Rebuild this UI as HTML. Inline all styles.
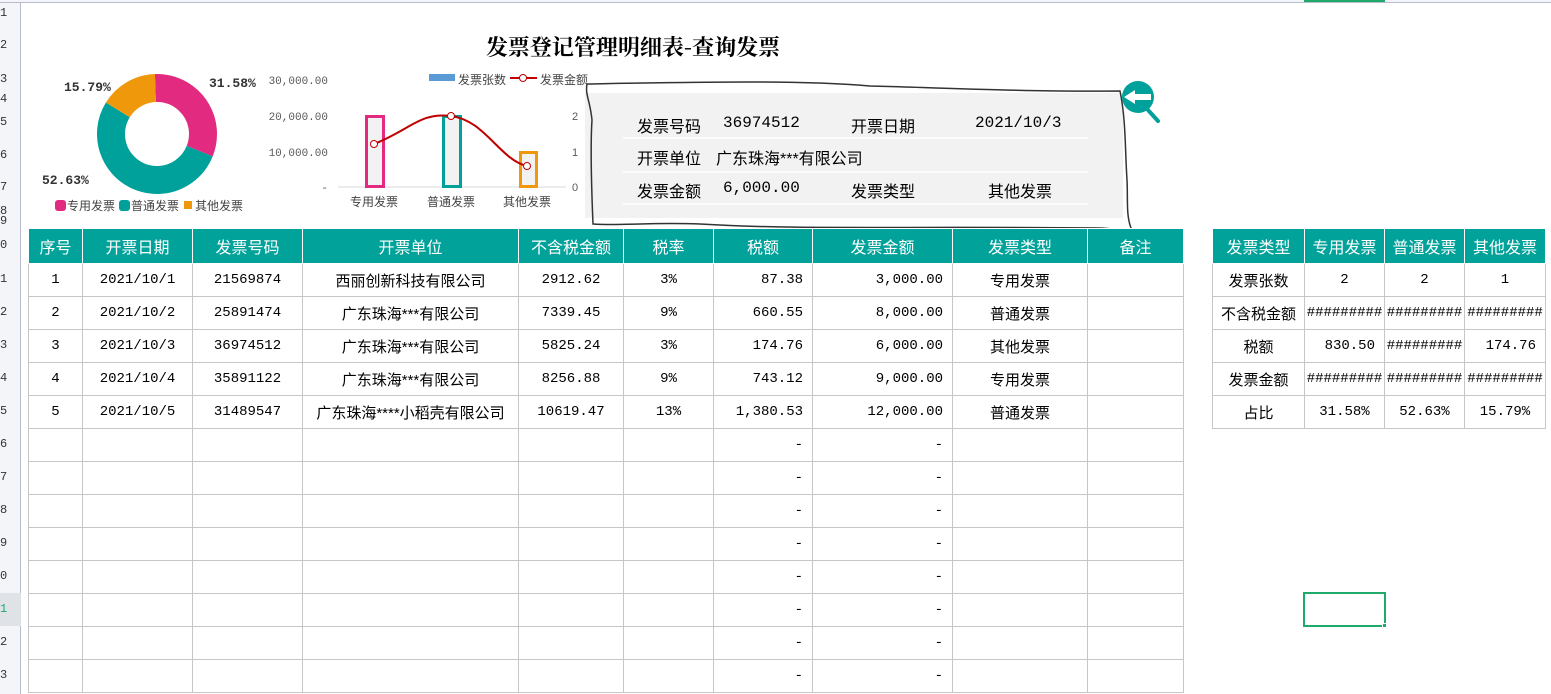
<!DOCTYPE html>
<html><head><meta charset="utf-8"><style>
*{margin:0;padding:0;box-sizing:border-box}
body{width:1551px;height:694px;overflow:hidden;background:#fff;position:relative;font-family:"Liberation Mono","Noto Sans CJK SC",monospace;color:#000}
.abs{position:absolute}
table{border-collapse:collapse;table-layout:fixed;position:absolute}
td{border:1px solid #c6c6c6;height:33px;font-size:14px;text-align:center;white-space:nowrap;overflow:hidden;padding:0 6px}
tr.h td{background:#00a29a;color:#fff;height:35px;font-size:16px;border-color:#fff;font-family:"Noto Sans CJK SC",sans-serif}
td.r{text-align:right;padding-right:9px}
td.cjk,.cjk{font-family:"Liberation Sans","Noto Sans CJK SC",sans-serif;font-size:15px}
.rh{position:absolute;left:0;width:20px;font-size:12px;text-align:right;padding-right:14px;color:#333}
</style></head><body>
<div class="abs" style="left:0;top:0;width:21px;height:694px;background:#f4f5f8;border-right:1px solid #b8bccc"></div>
<div class="abs" style="left:0;top:0;width:1551px;height:3px;background:#f4f5f8;border-bottom:1px solid #b8bccc"></div>
<div class="abs" style="left:1304px;top:0;width:81px;height:2px;background:#1faa6b"></div>
<div class="rh" style="top:6px">1</div><div class="rh" style="top:38px">2</div><div class="rh" style="top:72px">3</div><div class="rh" style="top:92px">4</div><div class="rh" style="top:115px">5</div><div class="rh" style="top:148px">6</div><div class="rh" style="top:180px">7</div><div class="rh" style="top:204px">8</div><div class="rh" style="top:214px">9</div><div class="rh" style="top:238px">0</div>
<div class="rh" style="top:272px">1</div><div class="rh" style="top:305px">2</div><div class="rh" style="top:338px">3</div><div class="rh" style="top:371px">4</div><div class="rh" style="top:404px">5</div><div class="rh" style="top:437px">6</div><div class="rh" style="top:470px">7</div><div class="rh" style="top:503px">8</div><div class="rh" style="top:536px">9</div><div class="rh" style="top:569px">0</div>
<div class="abs" style="left:0;top:593px;width:21px;height:33px;background:#dfe3e8"></div><div class="rh" style="top:602px;color:#1faa6b">1</div><div class="rh" style="top:635px">2</div><div class="rh" style="top:668px">3</div>

<div class="abs" style="left:433px;top:31px;width:400px;text-align:center;font-family:'Noto Serif CJK SC',serif;font-weight:bold;font-size:22px">发票登记管理明细表-查询发票</div>

<svg class="abs" style="left:0;top:0" width="590" height="225">
<g transform="rotate(-92 157 134)" fill="none" stroke-width="28">
<circle cx="157" cy="134" r="46" stroke="#e22b80" stroke-dasharray="91.3 300"/>
<circle cx="157" cy="134" r="46" stroke="#00a19a" stroke-dasharray="152.1 300" stroke-dashoffset="-91.3"/>
<circle cx="157" cy="134" r="46" stroke="#f0980c" stroke-dasharray="45.6 300" stroke-dashoffset="-243.4"/>
</g>
<g font-family="Liberation Mono,monospace" font-weight="bold" font-size="13" fill="#333">
<text x="64" y="91">15.79%</text><text x="209" y="87">31.58%</text><text x="42" y="184">52.63%</text></g>
<g font-family="Noto Sans CJK SC,sans-serif" font-size="12" fill="#444">
<rect x="55" y="200" width="11" height="11" rx="3" fill="#e22b80"/><text x="67" y="210">专用发票</text>
<rect x="119" y="200" width="11" height="11" rx="3" fill="#00a19a"/><text x="131" y="210">普通发票</text>
<rect x="184" y="201" width="8" height="8" fill="#f0980c"/><text x="195" y="210">其他发票</text>
</g>
<g font-family="Liberation Mono,monospace" font-size="11" fill="#595959" text-anchor="end">
<text x="328" y="84">30,000.00</text><text x="328" y="120">20,000.00</text><text x="328" y="156">10,000.00</text><text x="328" y="191">-</text></g>
<g font-family="Liberation Sans,sans-serif" font-size="11" fill="#595959">
<text x="572" y="120">2</text><text x="572" y="156">1</text><text x="572" y="191">0</text></g>
<line x1="338" y1="187" x2="566" y2="187" stroke="#d9d9d9"/>
<rect x="366.5" y="116.5" width="17" height="70" fill="#f2f2f2" stroke="#e22b80" stroke-width="3"/>
<rect x="443.5" y="116.5" width="17" height="70" fill="#f2f2f2" stroke="#00a19a" stroke-width="3"/>
<rect x="520.5" y="152.5" width="16" height="34" fill="#f2f2f2" stroke="#f0980c" stroke-width="3"/>
<path d="M374 144 C 410 130, 420 112, 451 116 C 485 120, 500 160, 527 166" fill="none" stroke="#c00000" stroke-width="2"/>
<g fill="#fff" stroke="#c00000"><circle cx="374" cy="144" r="3.5"/><circle cx="451" cy="116" r="3.5"/><circle cx="527" cy="166" r="3.5"/></g>
<g font-family="Noto Sans CJK SC,sans-serif" font-size="12" fill="#444" text-anchor="middle">
<text x="374" y="206">专用发票</text><text x="451" y="206">普通发票</text><text x="527" y="206">其他发票</text></g>
<rect x="429" y="74" width="26" height="7" fill="#5b9bd5"/>
<text x="458" y="84" font-family="Noto Sans CJK SC,sans-serif" font-size="12" fill="#444">发票张数</text>
<line x1="510" y1="78" x2="537" y2="78" stroke="#c00000" stroke-width="2"/><circle cx="523" cy="78" r="3.5" fill="#fff" stroke="#c00000"/>
<text x="540" y="84" font-family="Noto Sans CJK SC,sans-serif" font-size="12" fill="#444">发票金额</text>
</svg>

<div class="abs" style="left:585px;top:93px;width:538px;height:125px;background:#f2f2f2"></div>
<svg class="abs" style="left:0;top:0" width="1551" height="240">
<path d="M587 84 C 700 82, 800 80, 870 86 C 950 88, 1030 92, 1120 91 C 1126 120, 1125 150, 1127 180 C 1128 200, 1126 215, 1131 228 C 1128 233, 1122 229, 1100 228 C 900 226, 800 230, 700 224 C 650 222, 620 226, 593 224 C 592 200, 590 150, 592 120 C 590 100, 585 95, 587 84 Z" fill="none" stroke="#333" stroke-width="1.5"/>
<g stroke="#fff" stroke-width="1.5"><line x1="623" y1="138" x2="1088" y2="138"/><line x1="623" y1="172" x2="1088" y2="172"/><line x1="623" y1="204" x2="1088" y2="204"/></g>
<line x1="1148" y1="110" x2="1158" y2="121" stroke="#00a19a" stroke-width="4" stroke-linecap="round"/>
<circle cx="1138" cy="97" r="16" fill="#00a19a"/>
<path d="M1124 97 L1135 90 L1135 94 L1151 94 L1151 100 L1135 100 L1135 104 Z" fill="#fff"/>
</svg>
<div class="abs cjk" style="left:637px;top:113px;font-size:16px">发票号码</div>
<div class="abs" style="left:723px;top:114px;font-size:16px">36974512</div>
<div class="abs cjk" style="left:851px;top:113px;font-size:16px">开票日期</div>
<div class="abs" style="left:975px;top:114px;font-size:16px">2021/10/3</div>
<div class="abs cjk" style="left:637px;top:145px;font-size:16px">开票单位</div>
<div class="abs cjk" style="left:716px;top:145px;font-size:16px">广东珠海***有限公司</div>
<div class="abs cjk" style="left:637px;top:178px;font-size:16px">发票金额</div>
<div class="abs" style="left:723px;top:179px;font-size:16px">6,000.00</div>
<div class="abs cjk" style="left:851px;top:178px;font-size:16px">发票类型</div>
<div class="abs cjk" style="left:988px;top:178px;font-size:16px">其他发票</div>

<table style="left:28px;top:228px;width:1155px">
<colgroup><col style="width:54px"><col style="width:110px"><col style="width:110px"><col style="width:216px"><col style="width:105px"><col style="width:90px"><col style="width:99px"><col style="width:140px"><col style="width:135px"><col style="width:96px"></colgroup>
<tr class="h"><td>序号</td><td>开票日期</td><td>发票号码</td><td>开票单位</td><td>不含税金额</td><td>税率</td><td>税额</td><td>发票金额</td><td>发票类型</td><td>备注</td></tr>
<tr><td>1</td><td>2021/10/1</td><td>21569874</td><td class="cjk">西丽创新科技有限公司</td><td>2912.62</td><td>3%</td><td class="r">87.38</td><td class="r">3,000.00</td><td class="cjk">专用发票</td><td></td></tr>
<tr><td>2</td><td>2021/10/2</td><td>25891474</td><td class="cjk">广东珠海***有限公司</td><td>7339.45</td><td>9%</td><td class="r">660.55</td><td class="r">8,000.00</td><td class="cjk">普通发票</td><td></td></tr>
<tr><td>3</td><td>2021/10/3</td><td>36974512</td><td class="cjk">广东珠海***有限公司</td><td>5825.24</td><td>3%</td><td class="r">174.76</td><td class="r">6,000.00</td><td class="cjk">其他发票</td><td></td></tr>
<tr><td>4</td><td>2021/10/4</td><td>35891122</td><td class="cjk">广东珠海***有限公司</td><td>8256.88</td><td>9%</td><td class="r">743.12</td><td class="r">9,000.00</td><td class="cjk">专用发票</td><td></td></tr>
<tr><td>5</td><td>2021/10/5</td><td>31489547</td><td class="cjk" style="padding:0">广东珠海****小稻壳有限公司</td><td>10619.47</td><td>13%</td><td class="r">1,380.53</td><td class="r">12,000.00</td><td class="cjk">普通发票</td><td></td></tr>
<tr><td></td><td></td><td></td><td></td><td></td><td></td><td class="r">-</td><td class="r">-</td><td></td><td></td></tr>
<tr><td></td><td></td><td></td><td></td><td></td><td></td><td class="r">-</td><td class="r">-</td><td></td><td></td></tr>
<tr><td></td><td></td><td></td><td></td><td></td><td></td><td class="r">-</td><td class="r">-</td><td></td><td></td></tr>
<tr><td></td><td></td><td></td><td></td><td></td><td></td><td class="r">-</td><td class="r">-</td><td></td><td></td></tr>
<tr><td></td><td></td><td></td><td></td><td></td><td></td><td class="r">-</td><td class="r">-</td><td></td><td></td></tr>
<tr><td></td><td></td><td></td><td></td><td></td><td></td><td class="r">-</td><td class="r">-</td><td></td><td></td></tr>
<tr><td></td><td></td><td></td><td></td><td></td><td></td><td class="r">-</td><td class="r">-</td><td></td><td></td></tr>
<tr><td></td><td></td><td></td><td></td><td></td><td></td><td class="r">-</td><td class="r">-</td><td></td><td></td></tr>
</table>

<table style="left:1212px;top:228px;width:333px">
<colgroup><col style="width:92px"><col style="width:80px"><col style="width:80px"><col style="width:81px"></colgroup>
<tr class="h"><td>发票类型</td><td>专用发票</td><td>普通发票</td><td>其他发票</td></tr>
<tr><td class="cjk">发票张数</td><td>2</td><td>2</td><td>1</td></tr>
<tr><td class="cjk" style="padding:0">不含税金额</td><td style="padding:0">#########</td><td style="padding:0">#########</td><td style="padding:0">#########</td></tr>
<tr><td class="cjk">税额</td><td class="r">830.50</td><td style="padding:0">#########</td><td class="r">174.76</td></tr>
<tr><td class="cjk">发票金额</td><td style="padding:0">#########</td><td style="padding:0">#########</td><td style="padding:0">#########</td></tr>
<tr><td class="cjk">占比</td><td>31.58%</td><td>52.63%</td><td>15.79%</td></tr>
</table>

<div class="abs" style="left:1303px;top:592px;width:83px;height:35px;border:2px solid #1faa6b"></div>
<div class="abs" style="left:1382px;top:623px;width:5px;height:5px;background:#1faa6b;border:1px solid #fff"></div>
</body></html>
